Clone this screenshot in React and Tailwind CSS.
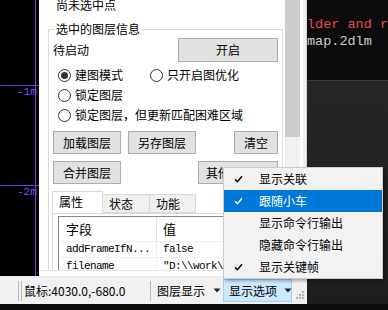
import React from 'react'

const ui = { fontFamily: '"Noto Sans CJK SC", "Noto Sans", sans-serif' }
const mono = { fontFamily: '"Liberation Mono", "DejaVu Sans Mono", monospace' }

function Radio({ checked }) {
  return (
    <span className="w-[13px] h-[13px] rounded-full border border-[#333] bg-white flex items-center justify-center shrink-0">
      {checked && <span className="w-[7px] h-[7px] rounded-full bg-[#333]" />}
    </span>
  )
}

function Btn({ w, children, className = '' }) {
  return (
    <div className={`${w} h-full bg-[#e1e1e1] border border-[#adadad] flex items-center justify-center text-[12px] text-black whitespace-nowrap ${className}`}>
      {children}
    </div>
  )
}

function Check() {
  return (
    <svg width="9" height="8" viewBox="0 0 9 8" className="shrink-0">
      <path d="M1 4.2 L3.4 6.6 L8 1.2" fill="none" stroke="currentColor" strokeWidth="1.4" />
    </svg>
  )
}

function Caret() {
  return (
    <svg width="8" height="5" viewBox="0 0 8 5" className="shrink-0 block">
      <path d="M0.5 0.5 H7.5 L4 4.5 Z" fill="#222" />
    </svg>
  )
}

const menuItems = [
  { label: '显示关联', checked: true },
  { label: '跟随小车', checked: true, active: true },
  { label: '显示命令行输出' },
  { label: '隐藏命令行输出' },
  { label: '显示关键帧', checked: true },
]

export default function App() {
  return (
    <div className="w-[388px] h-[310px] flex bg-black overflow-hidden relative" style={ui}>
      {/* left column: canvas + panel + status bar */}
      <div className="w-[307px] min-w-[307px] flex flex-col shrink-0 overflow-hidden">
        <div className="h-[276px] flex">
          {/* canvas strip */}
          <div className="w-[39px] h-full bg-black shrink-0">
            <svg width="39" height="276" viewBox="0 0 39 276" className="block">
              <line x1="35.5" y1="0" x2="35.5" y2="276" stroke="#7d3ce0" strokeWidth="1" />
              <line x1="0" y1="85.5" x2="39" y2="85.5" stroke="#7d3ce0" strokeWidth="1" />
              <line x1="0" y1="185.5" x2="39" y2="185.5" stroke="#7d3ce0" strokeWidth="1" />
              <text x="17" y="95" fontSize="11" fill="#8b45ff" style={mono}>-1m</text>
              <text x="17" y="195" fontSize="11" fill="#8b45ff" style={mono}>-2m</text>
            </svg>
          </div>

          {/* property panel */}
          <div className="w-[246px] h-full bg-white flex flex-col shrink-0 overflow-hidden">
            <div className="h-[271px] overflow-hidden border-b border-[#e3e3e3]">
              <div className="mt-[-4px] h-[18px] pl-[17px] text-[12px] leading-[18px] text-black">尚未选中点</div>

              <fieldset className="ml-[9px] mt-[6px] w-[235px] min-w-0 border border-[#dcdcdc] px-[4px] pb-2 h-[300px]">
                <legend className="ml-[2px] px-[1px] text-[12px] leading-[18px] text-black">选中的图层信息</legend>

                <div className="h-[24px] flex items-center">
                  <span className="text-[12px] text-black">待启动</span>
                  <div className="ml-auto h-[24px]">
                    <Btn w="w-[100px]">开启</Btn>
                  </div>
                </div>

                <div className="mt-[3px] flex flex-col text-[12px] text-black">
                  <div className="h-[20px] flex items-center pl-[5px]">
                    <Radio checked />
                    <span className="ml-[4px] w-[75px]">建图模式</span>
                    <Radio />
                    <span className="ml-[4px]">只开启图优化</span>
                  </div>
                  <div className="h-[20px] flex items-center pl-[5px]">
                    <Radio />
                    <span className="ml-[4px]">锁定图层</span>
                  </div>
                  <div className="h-[20px] flex items-center pl-[5px]">
                    <Radio />
                    <span className="ml-[4px] whitespace-nowrap">锁定图层，但更新匹配困难区域</span>
                  </div>
                </div>

                <div className="mt-[6px] h-[23px] flex">
                  <Btn w="w-[68px]">加载图层</Btn>
                  <Btn w="w-[68px]" className="ml-[7px]">另存图层</Btn>
                  <Btn w="w-[44px]" className="ml-auto">清空</Btn>
                </div>

                <div className="mt-[7px] h-[23px] flex">
                  <Btn w="w-[68px]">合并图层</Btn>
                  <Btn w="w-[80px]" className="ml-auto !justify-start pl-[7px]">其他操作...</Btn>
                </div>

                {/* tabs */}
                <div className="mt-[8px] h-[21px] flex items-end -ml-[1px] relative z-10 text-[12px] text-black">
                  <div className="w-[51px] h-[22px] bg-white border border-[#d9d9d9] border-b-white flex items-center pl-[6px]">属性</div>
                  <div className="w-[47px] h-[19px] bg-[#f0f0f0] border border-[#d9d9d9] border-l-0 flex items-center pl-[6px]">状态</div>
                  <div className="w-[46px] h-[19px] bg-[#f0f0f0] border border-[#d9d9d9] border-l-0 flex items-center pl-[6px]">功能</div>
                </div>
                <div className="-ml-[1px] border border-[#d9d9d9] bg-white pt-[2px] pl-[5px] pr-[4px] h-[80px]">
                  <div className="border border-[#828790] border-r-0 h-[70px] bg-white">
                    <div className="h-[25px] flex border-b border-[#f0f0f0] text-[13px] text-black">
                      <div className="w-[98px] pl-[7px] flex items-center border-r border-[#e5e5e5]">字段</div>
                      <div className="pl-[6px] flex items-center">值</div>
                    </div>
                    <div className="h-[16px] flex border-b border-[#f0f0f0] text-[11px] tracking-[-0.6px] text-black" style={mono}>
                      <div className="w-[98px] pl-[7px] flex items-center border-r border-[#f0f0f0] whitespace-nowrap">addFrameIfN...</div>
                      <div className="pl-[6px] flex items-center whitespace-nowrap">false</div>
                    </div>
                    <div className="h-[16px] flex text-[11px] tracking-[-0.6px] text-black" style={mono}>
                      <div className="w-[98px] pl-[7px] flex items-center border-r border-[#f0f0f0] whitespace-nowrap">filename</div>
                      <div className="pl-[6px] flex items-center whitespace-nowrap">"D:\\work\</div>
                    </div>
                  </div>
                </div>
              </fieldset>
            </div>
          </div>

          {/* scrollbar */}
          <div className="w-[15px] h-full bg-[#f0f0f0] flex flex-col shrink-0">
            <div className="h-[137px] bg-[#cdcdcd]" />
          </div>
          <div className="w-[7px] h-full bg-[#f0f0f0] border-l-[3px] border-white border-r border-r-[#d4d4d4] shrink-0" />
        </div>

        {/* status bar */}
        <div className="h-[28px] bg-[#f0f0f0] flex items-center text-[12px] text-black border-t border-[#e8e8e8] whitespace-nowrap">
          <div className="ml-[18px] h-[20px] w-[4px] border-l border-r border-[#b9b9b9] shrink-0" />
          <span className="ml-[2px] w-[126px] shrink-0">鼠标:4030.0,-680.0</span>
          <div className="h-[20px] w-[1px] bg-[#b9b9b9] shrink-0" />
          <span className="ml-[6px] shrink-0">图层显示</span>
          <span className="ml-[8px] shrink-0"><Caret /></span>
          <div className="ml-[2px] h-[23px] w-[69px] bg-[#cce8ff] border border-[#99d1ff] flex items-center pl-[5px] shrink-0">
            <span>显示选项</span>
            <span className="ml-[7px]"><Caret /></span>
          </div>
          <svg width="10" height="10" viewBox="0 0 10 10" className="ml-[3px] mt-[8px] shrink-0">
            <rect x="7" y="1" width="2" height="2" fill="#b5b5b5" />
            <rect x="4" y="4" width="2" height="2" fill="#b5b5b5" />
            <rect x="7" y="4" width="2" height="2" fill="#b5b5b5" />
            <rect x="1" y="7" width="2" height="2" fill="#b5b5b5" />
            <rect x="4" y="7" width="2" height="2" fill="#b5b5b5" />
            <rect x="7" y="7" width="2" height="2" fill="#b5b5b5" />
          </svg>
        </div>
        <div className="flex-1 bg-[#0c0c0c]" />
      </div>

      {/* terminal */}
      <div className="flex-1 min-w-0 flex flex-col overflow-hidden">
        <div className="h-[81px] bg-[#0c0c0c] border-b border-[#3b3b3b] pt-[16px] text-[13.5px] leading-[17px] whitespace-nowrap overflow-hidden" style={mono}>
          <div className="text-[#e74856]">lder and re</div>
          <div className="text-[#cccccc]">map.2dlm</div>
        </div>
        <div className="h-[223px] bg-gradient-to-b from-[#262626] to-[#1e1e1e]" />
        <div className="flex-1 bg-[#0c0c0c]" />
      </div>

      {/* dropdown menu */}
      <div className="absolute left-[223px] top-[167px] w-[160px] bg-[#f2f2f2] border border-[#cccccc] shadow-[2px_2px_3px_rgba(0,0,0,0.3)] text-[12px]">
        {menuItems.map((it) => (
          <div
            key={it.label}
            className={`h-[22px] flex items-center ${it.active ? 'bg-[#0078d7] text-white' : 'text-black'}`}
          >
            <span className="w-[35px] pl-[10px] flex items-center">{it.checked && <Check />}</span>
            <span className="whitespace-nowrap">{it.label}</span>
          </div>
        ))}
      </div>
    </div>
  )
}
